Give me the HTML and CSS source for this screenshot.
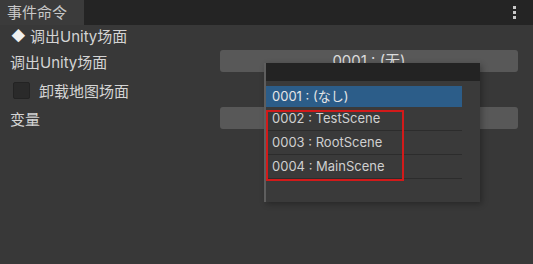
FILE: index.html
```html
<!DOCTYPE html>
<html lang="zh">
  <head>
    <meta charset="UTF-8" />
    <title>事件命令</title>
    <link rel="stylesheet" href="styles.css">
  </head>
  <body>
    <div class="header">
      <div class="tab">事件命令</div>
      <div class="kebab"><span></span><span></span><span></span></div>
    </div>
    <div class="rows">
      <div class="row row-title"><span class="diamond">◆</span>调出Unity场面</div>
      <div class="row row-scene">
        <div class="label">调出Unity场面</div>
        <div class="button">0001 : (无)</div>
      </div>
      <div class="row row-check">
        <div class="checkbox"></div>
        <div class="label">卸载地图场面</div>
      </div>
      <div class="row row-var">
        <div class="label">变量</div>
        <div class="button"></div>
      </div>
    </div>

    <div class="popup">
      <div class="search"></div>
      <div class="item selected">0001 : (なし)</div>
      <div class="item">0002 : TestScene</div>
      <div class="item">0003 : RootScene</div>
      <div class="item">0004 : MainScene</div>
      <div class="mark"></div>
    </div>
  </body>
</html>
```

FILE: styles.css
```css
* {
  margin: 0;
  padding: 0;
  box-sizing: border-box;
}
body {
  background-color: #383838;
  color: #d4d4d4;
  font-family: Inter, "Noto Sans CJK SC", sans-serif;
  font-size: 15px;
  overflow: hidden;
}
.header {
  height: 25px;
  background-color: #242424;
  display: flex;
  justify-content: space-between;
}
.tab {
  width: 84px;
  background-color: #3b3b3b;
  padding-left: 7px;
  line-height: 25px;
  color: #c8c8c8;
}
.kebab {
  display: flex;
  flex-direction: column;
  gap: 2px;
  padding-top: 6px;
  margin-right: 17px;
}
.kebab span {
  width: 3px;
  height: 3px;
  background-color: #c8c8c8;
}
.rows {
  padding: 0 15px 0 10px;
}
.row {
  display: flex;
  align-items: center;
}
.row-title {
  height: 20px;
}
.diamond {
  width: 20px;
  padding-left: 1px;
  font-size: 14px;
  color: #f0f0f0;
}
.row-scene {
  height: 22px;
  margin-top: 5px;
}
.row-check {
  height: 24px;
  margin-top: 6px;
}
.row-var {
  height: 22px;
  margin-top: 5px;
}
.label {
  width: 210px;
}
.row-check .label {
  width: auto;
}
.button {
  flex: 1;
  height: 22px;
  background-color: #585858;
  border-radius: 3px;
  text-align: center;
  line-height: 22px;
  color: #dcdcdc;
}
.checkbox {
  width: 17px;
  height: 17px;
  margin: 0 9px 0 3px;
  background-color: #2a2a2a;
  border: 1px solid #232323;
  border-radius: 2px;
}

.popup {
  position: absolute;
  left: 264px;
  top: 63px;
  width: 216px;
  height: 139px;
  background-color: #3a3a3a;
  border-left: 2px solid #5e5e5e;
  box-shadow: 2px 2px 6px rgba(0, 0, 0, 0.3);
  font-size: 13px;
}
.search {
  height: 18px;
  background-color: #232323;
  margin-bottom: 5px;
}
.item {
  width: 196px;
  height: 24px;
  line-height: 23px;
  padding-left: 6px;
  border-bottom: 1px solid #2c2c2c;
  color: #d0d0d0;
}
.item.selected {
  height: 21px;
  line-height: 21px;
  background-color: #2c5d89;
  border-bottom: none;
  color: #e6e6e6;
}
.mark {
  position: absolute;
  left: 0;
  top: 47px;
  width: 138px;
  height: 71px;
  border: 2px solid #d21a1a;
}
```
